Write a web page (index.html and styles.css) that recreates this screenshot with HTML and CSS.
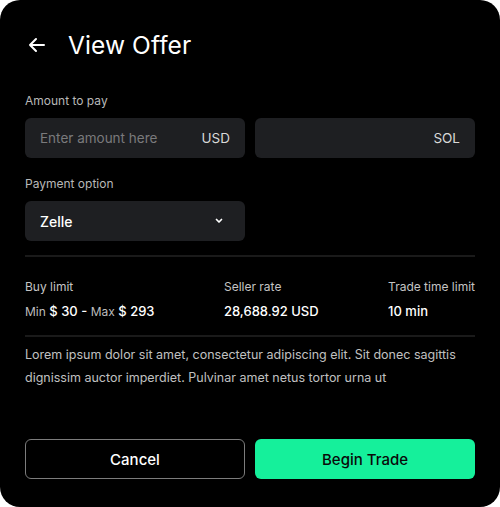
FILE: index.html
```html
<!DOCTYPE html>
<html>
<head>
<meta charset="utf-8">
<link rel="stylesheet" href="styles.css">
</head>
<body>
<div class="card">
  <div class="header">
    <svg class="back" width="18" height="16" viewBox="0 0 18 16" fill="none" stroke="#fff" stroke-width="2" stroke-linecap="round" stroke-linejoin="round"><path d="M16 8H2M8 2L2 8l6 6"/></svg>
    <h1>View Offer</h1>
  </div>

  <div class="label">Amount to pay</div>
  <div class="row">
    <div class="field"><span class="ph">Enter amount here</span><span class="cur">USD</span></div>
    <div class="field"><span class="ph"></span><span class="cur">SOL</span></div>
  </div>

  <div class="label label2">Payment option</div>
  <div class="row">
    <div class="field select"><span class="val">Zelle</span>
      <svg width="10" height="6" viewBox="0 0 10 6" fill="none" stroke="#fff" stroke-width="1.7" stroke-linecap="round" stroke-linejoin="round"><path d="M2.5 1.5L5 4l2.5-2.5"/></svg>
    </div>
  </div>

  <div class="divider"></div>

  <div class="stats">
    <div class="stat">
      <div class="slabel">Buy limit</div>
      <div class="sval"><span class="dim">Min</span> $ 30 - <span class="dim">Max</span> $ 293</div>
    </div>
    <div class="stat">
      <div class="slabel">Seller rate</div>
      <div class="sval">28,688.92 USD</div>
    </div>
    <div class="stat">
      <div class="slabel">Trade time limit</div>
      <div class="sval">10 min</div>
    </div>
  </div>

  <div class="divider d2"></div>

  <p class="desc">Lorem ipsum dolor sit amet, consectetur adipiscing elit. Sit donec sagittis dignissim auctor imperdiet. Pulvinar amet netus tortor urna ut</p>

  <div class="row buttons">
    <button class="btn cancel">Cancel</button>
    <button class="btn primary">Begin Trade</button>
  </div>
</div>
</body>
</html>
```

FILE: styles.css
```css
html, body { margin: 0; padding: 0; background: #fff; }
body { font-family: Inter, "Noto Sans", sans-serif; }
.card {
  width: 500px;
  height: 507px;
  box-sizing: border-box;
  background: #000;
  border-radius: 20px;
  padding: 29px 25px 0 25px;
  color: #fff;
}
.header { display: flex; align-items: center; height: 32px; }
.back { margin-left: 3px; margin-right: 22px; }
h1 { margin: 0; font-size: 24.5px; font-weight: 400; letter-spacing: 0.1px; }
.label { margin-top: 32px; font-size: 12px; color: #b8b8b8; line-height: 15px; }
.label2 { margin-top: 18px; }
.row { display: grid; grid-template-columns: 1fr 1fr; gap: 10px; margin-top: 10px; }
.field {
  box-sizing: border-box;
  height: 40px;
  background: #1e1f22;
  border-radius: 6px;
  display: flex;
  align-items: center;
  justify-content: space-between;
  padding: 0 15px;
  font-size: 13.5px;
}
.ph { color: #7a7a7c; }
.cur { color: #d9d9d9; }
.val { color: #fff; font-weight: 450; font-size: 14px; }
.select svg { margin-right: 6px; }
.divider { height: 2px; background: #1a1a1a; margin-top: 14px; }
.stats { display: flex; justify-content: space-between; margin-top: 22px; }
.slabel { font-size: 12px; color: #c4c4c4; line-height: 15px; }
.sval { margin-top: 9px; font-size: 13px; font-weight: 450; color: #fff; line-height: 16px; }
.dim { color: #bdbdbd; font-weight: 400; font-size: 12px; }
.d2 { margin-top: 15px; }
.desc { margin: 6px 0 0 0; font-size: 12.5px; line-height: 23px; color: #c0c0c0; }
.buttons { margin-top: 50px; }
.btn {
  box-sizing: border-box;
  height: 40px;
  border-radius: 6px;
  font-family: Inter, "Noto Sans", sans-serif;
  font-size: 15px;
  font-weight: 450;
  margin: 0;
}
.cancel { background: #000; color: #fff; border: 1px solid #7c7c7c; }
.primary { background: #15f09b; color: #0a0a0a; border: none; }
```
